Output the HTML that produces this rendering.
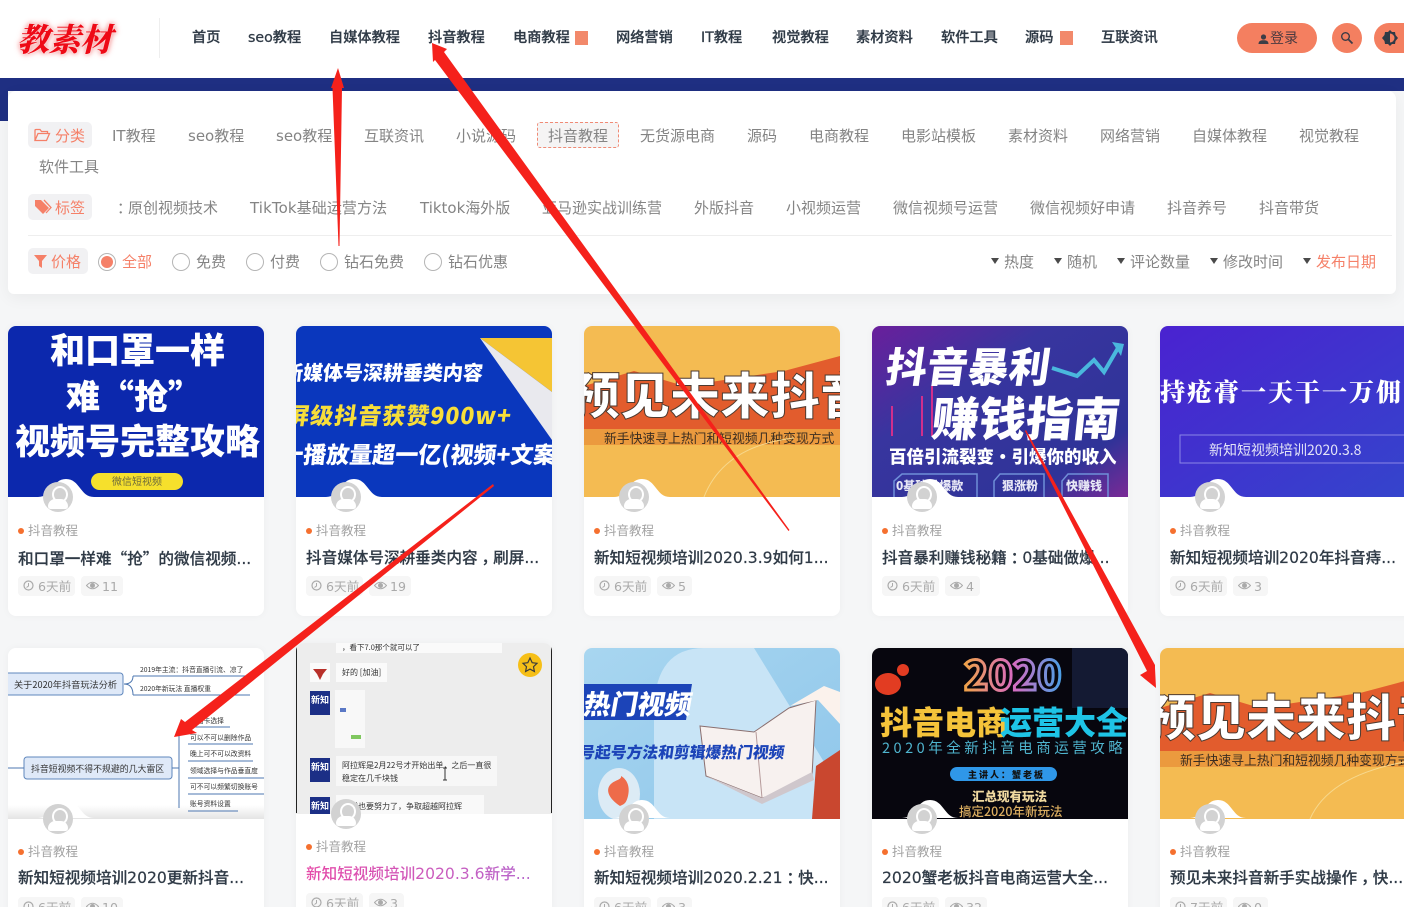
<!DOCTYPE html>
<html lang="zh-CN"><head><meta charset="utf-8"><title>抖音教程</title>
<style>
*{box-sizing:border-box}
html,body{margin:0;padding:0;width:1404px;height:907px;overflow:hidden;background:#f5f6f7}
body{position:relative;font-family:"DejaVu Sans","Noto Sans CJK SC",sans-serif;font-size:14px;color:#777}
.t{position:absolute;white-space:nowrap;line-height:20px;height:20px}
.nav{top:28px;font-size:14.2px;color:#2f3a46;font-weight:500;-webkit-text-stroke:.25px #2f3a46}
.f{font-size:15px;color:#848484}
.chip{position:absolute;background:#f1f1f3;border-radius:5px;height:26px;color:#f58068;font-size:15px;line-height:28px;white-space:nowrap}
.radio{position:absolute;top:253px;width:18px;height:18px;border:1px solid #b5b5b5;border-radius:50%;background:#fff}
.sq{position:absolute;top:31px;width:13px;height:14px;background:#f2896b}
.car{position:absolute;top:258px;width:0;height:0;border-left:4.500px solid transparent;border-right:4.500px solid transparent;border-top:6px solid #4a4a4a}
.card{position:absolute;width:256px;background:#fff;border-radius:8px;box-shadow:0 0 8px rgba(0,0,0,.04);overflow:hidden}
.card svg.th{position:absolute;left:0;display:block}
.notch{position:absolute;left:8px;width:100px;height:18px}
.av{position:absolute;left:35px;width:30px;height:30px;border-radius:50%;background:#d2d2d2;overflow:hidden}
.av:before{content:"";position:absolute;left:9px;top:4px;width:12px;height:13px;border-radius:50%;border:2px solid #fff;background:#d2d2d2}
.av:after{content:"";position:absolute;left:5px;top:17px;width:20px;height:10px;border-radius:8px 8px 3px 3px;background:#fff}
.dot{position:absolute;left:10px;width:6px;height:6px;border-radius:50%;background:#f5702f}
.cat{position:absolute;left:20px;font-size:12.500px;color:#a2a2a2;line-height:18px;white-space:nowrap}
.ti{position:absolute;left:10px;width:245px;font-size:15.600px;color:#2f3a46;line-height:22px;white-space:nowrap;font-weight:500;-webkit-text-stroke:.2px #2f3a46}
.p{display:inline-block;transform:translateX(4px)}
.q{font-family:"Noto Sans CJK SC",sans-serif}
.m{position:absolute;height:20px;background:#f6f6f6;border-radius:4px;font-size:12.600px;color:#aaa;line-height:21px;white-space:nowrap;padding-left:20px}
.m.e{padding-left:21px}
.m svg{position:absolute;left:5px;top:4px}
</style></head><body>

<!-- header -->
<div style="position:absolute;left:0;top:0;width:1404px;height:78px;background:#fff"></div>
<div style="position:absolute;left:0;top:78px;width:1404px;height:13px;background:#1f2f82"></div>
<div style="position:absolute;left:0;top:91px;width:8px;height:30px;background:#1f2f82"></div>

<div class="t" style="left:17px;top:17px;height:42px;line-height:42px;font-family:'Noto Serif CJK SC',serif;font-weight:900;font-size:32px;font-style:italic;letter-spacing:-.5px;color:#ee0a16;text-shadow:0 0 2px #fff,0 0 4px #f48f8f,0 0 7px #f48f8f">教素材</div>
<div style="position:absolute;left:159px;top:18px;width:1px;height:40px;background:#eee"></div>

<div class="t nav" style="left:192px">首页</div>
<div class="t nav" style="left:248px">seo教程</div>
<div class="t nav" style="left:329px">自媒体教程</div>
<div class="t nav" style="left:428px">抖音教程</div>
<div class="t nav" style="left:513px">电商教程</div><div class="sq" style="left:575px"></div>
<div class="t nav" style="left:616px">网络营销</div>
<div class="t nav" style="left:701px">IT教程</div>
<div class="t nav" style="left:772px">视觉教程</div>
<div class="t nav" style="left:856px">素材资料</div>
<div class="t nav" style="left:941px">软件工具</div>
<div class="t nav" style="left:1025px">源码</div><div class="sq" style="left:1060px"></div>
<div class="t nav" style="left:1101px">互联资讯</div>

<div style="position:absolute;left:1237px;top:23px;width:80px;height:30px;border-radius:15px;background:#f47f60"></div>
<svg style="position:absolute;left:1258px;top:34px" width="11" height="11" viewBox="0 0 11 11"><circle cx="5.500" cy="3" r="2.600" fill="#3d3d46"/><path d="M.5 10c0-3 2-3.800 5-3.800s5 .8 5 3.800z" fill="#3d3d46"/></svg>
<div class="t" style="left:1270px;top:29px;font-size:14px;color:#4a3a40">登录</div>
<div style="position:absolute;left:1332px;top:23px;width:30px;height:30px;border-radius:50%;background:#f47f60"></div>
<svg style="position:absolute;left:1340px;top:31px" width="14" height="14" viewBox="0 0 14 14"><circle cx="5.500" cy="5.500" r="3.800" fill="none" stroke="#3b3b46" stroke-width="1.400"/><path d="M8.500 8.500L12.500 12.500" stroke="#3b3b46" stroke-width="1.800"/></svg>
<div style="position:absolute;left:1374px;top:23px;width:30px;height:30px;border-radius:50% 0 0 50%;background:#f47f60"></div>
<svg style="position:absolute;left:1382px;top:30px" width="16" height="16" viewBox="0 0 16 16"><path d="M8 0L10 2 13 2 13.500 5 16 8 13.500 11 13 14 10 14 8 16 6 14 3 14 2.500 11 0 8 2.500 5 3 2 6 2Z" fill="#2f3a46"/><path d="M8 3.500a4.500 4.500 0 0 1 0 9z" fill="#f47f60"/></svg>

<!-- filter panel -->
<div style="position:absolute;left:8px;top:91px;width:1388px;height:203px;background:#fff;border-radius:8px 8px 6px 6px;box-shadow:0 4px 16px rgba(0,0,0,.05)"></div>

<div class="chip" style="left:28px;top:122px;width:64px;padding-left:27px">分类</div>
<svg style="position:absolute;left:34px;top:128px" width="17" height="14" viewBox="0 0 17 14"><path d="M1 12.500V2.500Q1 1.500 2 1.500H6L7.500 3.500H13.500V5.500M1 12.500H12.500L15.500 5.500H4L1 12.500Z" fill="none" stroke="#f58068" stroke-width="1.300"/></svg>
<div class="t f" style="left:112px;top:126px">IT教程</div>
<div class="t f" style="left:188px;top:126px">seo教程</div>
<div class="t f" style="left:276px;top:126px">seo教程</div>
<div class="t f" style="left:364px;top:126px">互联资讯</div>
<div class="t f" style="left:456px;top:126px">小说源码</div>
<div style="position:absolute;left:537px;top:122px;width:82px;height:26px;border:1px dashed #f08a75;border-radius:3px;background:#f5f4f4"></div>
<div class="t f" style="left:548px;top:126px">抖音教程</div>
<div class="t f" style="left:640px;top:126px">无货源电商</div>
<div class="t f" style="left:747px;top:126px">源码</div>
<div class="t f" style="left:809px;top:126px">电商教程</div>
<div class="t f" style="left:901px;top:126px">电影站模板</div>
<div class="t f" style="left:1008px;top:126px">素材资料</div>
<div class="t f" style="left:1100px;top:126px">网络营销</div>
<div class="t f" style="left:1192px;top:126px">自媒体教程</div>
<div class="t f" style="left:1299px;top:126px">视觉教程</div>
<div class="t f" style="left:39px;top:157px">软件工具</div>

<div class="chip" style="left:28px;top:194px;width:64px;padding-left:27px">标签</div>
<svg style="position:absolute;left:34px;top:199px" width="18" height="16" viewBox="0 0 18 16"><path d="M1 1H7L15 9 9 15 1 7Z" fill="#f58068"/><path d="M10 1L17 8.500 12 14" fill="none" stroke="#f58068" stroke-width="1.300"/></svg>
<div class="t f" style="left:113px;top:198px"><span class="p">：</span>原创视频技术</div>
<div class="t f" style="left:250px;top:198px;letter-spacing:.1px">TikTok基础运营方法</div>
<div class="t f" style="left:420px;top:198px">Tiktok海外版</div>
<div class="t f" style="left:542px;top:198px">亚马逊实战训练营</div>
<div class="t f" style="left:694px;top:198px">外版抖音</div>
<div class="t f" style="left:786px;top:198px">小视频运营</div>
<div class="t f" style="left:893px;top:198px">微信视频号运营</div>
<div class="t f" style="left:1030px;top:198px">微信视频好申请</div>
<div class="t f" style="left:1167px;top:198px">抖音养号</div>
<div class="t f" style="left:1259px;top:198px">抖音带货</div>

<div style="position:absolute;left:28px;top:235px;width:1364px;height:1px;background:#eee"></div>

<div class="chip" style="left:28px;top:248px;width:60px;padding-left:23px">价格</div>
<svg style="position:absolute;left:34px;top:255px" width="13" height="13" viewBox="0 0 13 13"><path d="M0 0H13L8 6V13L5 11V6Z" fill="#f58068"/></svg>
<div class="radio" style="left:98px"></div><div style="position:absolute;left:102px;top:257px;width:10px;height:10px;border-radius:50%;background:#f58068;box-shadow:0 0 0 1px #f58068"></div>
<div class="t f" style="left:122px;top:252px;color:#f58068">全部</div>
<div class="radio" style="left:172px"></div><div class="t f" style="left:196px;top:252px">免费</div>
<div class="radio" style="left:246px"></div><div class="t f" style="left:270px;top:252px">付费</div>
<div class="radio" style="left:320px"></div><div class="t f" style="left:344px;top:252px">钻石免费</div>
<div class="radio" style="left:424px"></div><div class="t f" style="left:448px;top:252px">钻石优惠</div>

<div class="car" style="left:991px"></div><div class="t f" style="left:1004px;top:252px">热度</div>
<div class="car" style="left:1054px"></div><div class="t f" style="left:1067px;top:252px">随机</div>
<div class="car" style="left:1117px"></div><div class="t f" style="left:1130px;top:252px">评论数量</div>
<div class="car" style="left:1210px"></div><div class="t f" style="left:1223px;top:252px">修改时间</div>
<div class="car" style="left:1303px"></div><div class="t f" style="left:1316px;top:252px;color:#f58068">发布日期</div>

<!-- ROW 1 -->
<div class="card" style="left:8px;top:326px;height:290px">
<svg class="th" style="top:0" width="256" height="171" viewBox="0 0 256 171" font-family="'Noto Sans CJK SC',sans-serif" font-weight="900"><rect width="256" height="171" fill="#0c28ad"/>
<text x="42" y="37" font-size="35" fill="#fff">和口罩一样</text><text x="58" y="83" font-size="34" fill="#fff">难“抢”</text><text x="7" y="128" font-size="35" fill="#fff">视频号完整攻略</text>
<rect x="83" y="147" width="92" height="17" rx="8.500" fill="#f6e02c"/><text x="104" y="159" font-size="10" font-weight="400" fill="#6d6a3a">微信短视频</text></svg>
<svg class="notch" style="top:153px" viewBox="0 0 100 18"><path d="M22 18C36 18 36 0 50 0S64 18 78 18Z" fill="#fff"/></svg>
<div class="av" style="top:156px"></div><div class="dot" style="top:202px"></div><div class="cat" style="top:196px">抖音教程</div>
<div class="ti" style="top:221px">和口罩一样难<span class="q">“</span>抢<span class="q">”</span>的微信视频...</div>
<div class="m" style="left:10px;top:250px;width:57px"><svg width="11" height="11" viewBox="0 0 11 11"><circle cx="5.500" cy="5.500" r="4.500" fill="none" stroke="#aaa" stroke-width="1.200"/><path d="M5.500 3V6L3.500 7.500" fill="none" stroke="#aaa"/></svg>6天前</div>
<div class="m e" style="left:73px;top:250px;width:42px"><svg width="13" height="11" viewBox="0 0 13 11"><path d="M.5 5.500Q6.500-1 12.500 5.500 6.500 12 .5 5.500Z" fill="none" stroke="#aaa"/><circle cx="6.500" cy="5.500" r="2.500" fill="#aaa"/></svg>11</div>
</div>

<div class="card" style="left:296px;top:326px;height:290px">
<svg class="th" style="top:0" width="256" height="171" viewBox="0 0 256 171" font-family="'Noto Sans CJK SC',sans-serif" font-weight="900"><rect width="256" height="171" fill="#0a37bd"/>
<text x="-14" y="54" font-size="20" fill="#fff" transform="skewX(-6) translate(6 0)">新媒体号深耕垂类内容</text>
<text x="-11" y="98" font-size="23" letter-spacing="1" fill="#f7de3a" transform="skewX(-8) translate(14 0)">屏级抖音获赞900w+</text>
<text x="-16" y="137" font-size="23" fill="#fff" transform="skewX(-6) translate(14 0)">十播放量超一亿(视频+文案</text>
<path d="M184 12H256V66Z" fill="#f5c534"/><path d="M184 12L256 66V114Z" fill="#e9e9ee"/></svg>
<svg class="notch" style="top:153px" viewBox="0 0 100 18"><path d="M22 18C36 18 36 0 50 0S64 18 78 18Z" fill="#fff"/></svg>
<div class="av" style="top:156px"></div><div class="dot" style="top:202px"></div><div class="cat" style="top:196px">抖音教程</div>
<div class="ti" style="top:221px">抖音媒体号深耕垂类内容<span class="p">，</span>刷屏...</div>
<div class="m" style="left:10px;top:250px;width:57px"><svg width="11" height="11" viewBox="0 0 11 11"><circle cx="5.500" cy="5.500" r="4.500" fill="none" stroke="#aaa" stroke-width="1.200"/><path d="M5.500 3V6L3.500 7.500" fill="none" stroke="#aaa"/></svg>6天前</div>
<div class="m e" style="left:73px;top:250px;width:42px"><svg width="13" height="11" viewBox="0 0 13 11"><path d="M.5 5.500Q6.500-1 12.500 5.500 6.500 12 .5 5.500Z" fill="none" stroke="#aaa"/><circle cx="6.500" cy="5.500" r="2.500" fill="#aaa"/></svg>19</div>
</div>

<div class="card" style="left:584px;top:326px;height:290px">
<svg class="th" style="top:0" width="256" height="171" viewBox="0 0 256 171" font-family="'Noto Sans CJK SC',sans-serif" font-weight="900"><rect width="256" height="171" fill="#f4bb52"/>
<path d="M0 60L50 45 100 60 200 45 256 30V118H0Z" fill="#e25c2d"/><rect y="103" width="256" height="16" fill="#eb9a3e"/>
<text x="-14" y="88" font-size="50" fill="#fff" stroke="#4d3a30" stroke-width="1">预见未来抖音</text>
<text x="20" y="117" font-size="12.800" font-weight="400" fill="#3b2d20">新手快速寻上热门和短视频几种变现方式</text>
<path d="M120 171Q140 120 210 112" fill="none" stroke="#f7d88d"/></svg>
<svg class="notch" style="top:153px" viewBox="0 0 100 18"><path d="M22 18C36 18 36 0 50 0S64 18 78 18Z" fill="#fff"/></svg>
<div class="av" style="top:156px"></div><div class="dot" style="top:202px"></div><div class="cat" style="top:196px">抖音教程</div>
<div class="ti" style="top:221px">新知短视频培训2020.3.9如何1...</div>
<div class="m" style="left:10px;top:250px;width:57px"><svg width="11" height="11" viewBox="0 0 11 11"><circle cx="5.500" cy="5.500" r="4.500" fill="none" stroke="#aaa" stroke-width="1.200"/><path d="M5.500 3V6L3.500 7.500" fill="none" stroke="#aaa"/></svg>6天前</div>
<div class="m e" style="left:73px;top:250px;width:35px"><svg width="13" height="11" viewBox="0 0 13 11"><path d="M.5 5.500Q6.500-1 12.500 5.500 6.500 12 .5 5.500Z" fill="none" stroke="#aaa"/><circle cx="6.500" cy="5.500" r="2.500" fill="#aaa"/></svg>5</div>
</div>

<div class="card" style="left:872px;top:326px;height:290px">
<svg class="th" style="top:0" width="256" height="171" viewBox="0 0 256 171" font-family="'Noto Sans CJK SC',sans-serif" font-weight="900"><defs><linearGradient id="g4" x1="0" y1="0" x2="1" y2="1"><stop offset="0" stop-color="#6a1f9c"/><stop offset=".35" stop-color="#38359f"/><stop offset=".8" stop-color="#2f3398"/><stop offset="1" stop-color="#7a2a96"/></linearGradient></defs><rect width="256" height="171" fill="url(#g4)"/>
<path d="M180 42L205 50 222 34 232 46 246 22" fill="none" stroke="#4ab7dd" stroke-width="4"/><path d="M240 16L252 18 249 30Z" fill="#4ab7dd"/>
<path d="M20 110V80M50 110V70M60 110V60" stroke="#d02f8c" stroke-width="2"/>
<text x="10" y="56" font-size="41" fill="#fff" transform="skewX(-8) translate(10 0)">抖音暴利</text>
<text x="56" y="110" font-size="47" fill="#fff" transform="skewX(-6) translate(14 0)">赚钱指南</text>
<text x="17" y="137" font-size="17.500" fill="#fff">百倍引流裂变·引爆你的收入</text>
<g fill="none" stroke="#6f8fd8" stroke-width="1.500"><path d="M22 171V155L30 148H105V171"/><path d="M122 171V155L128 148H172V171"/><path d="M190 171V155L196 148H236V171"/></g>
<text x="24" y="164" font-size="12" fill="#e6e6f5">0基础做爆款</text><text x="130" y="164" font-size="12" fill="#e6e6f5">狠涨粉</text><text x="194" y="164" font-size="12" fill="#e6e6f5">快赚钱</text></svg>
<svg class="notch" style="top:153px" viewBox="0 0 100 18"><path d="M22 18C36 18 36 0 50 0S64 18 78 18Z" fill="#fff"/></svg>
<div class="av" style="top:156px"></div><div class="dot" style="top:202px"></div><div class="cat" style="top:196px">抖音教程</div>
<div class="ti" style="top:221px">抖音暴利赚钱秘籍<span class="p">：</span>0基础做爆...</div>
<div class="m" style="left:10px;top:250px;width:57px"><svg width="11" height="11" viewBox="0 0 11 11"><circle cx="5.500" cy="5.500" r="4.500" fill="none" stroke="#aaa" stroke-width="1.200"/><path d="M5.500 3V6L3.500 7.500" fill="none" stroke="#aaa"/></svg>6天前</div>
<div class="m e" style="left:73px;top:250px;width:35px"><svg width="13" height="11" viewBox="0 0 13 11"><path d="M.5 5.500Q6.500-1 12.500 5.500 6.500 12 .5 5.500Z" fill="none" stroke="#aaa"/><circle cx="6.500" cy="5.500" r="2.500" fill="#aaa"/></svg>4</div>
</div>

<div class="card" style="left:1160px;top:326px;height:290px">
<svg class="th" style="top:0" width="256" height="171" viewBox="0 0 256 171" font-family="'Noto Serif CJK SC',serif" font-weight="900"><defs><linearGradient id="g5" x1="0" y1="0" x2="1" y2="1"><stop offset="0" stop-color="#4a22d0"/><stop offset="1" stop-color="#3445cc"/></linearGradient></defs><rect width="256" height="171" fill="url(#g5)"/>
<text x="0" y="75" font-size="25" letter-spacing="2" fill="#fff">持疮膏一天干一万佣</text>
<rect x="20" y="109" width="250" height="28" fill="none" stroke="#8b86e6"/>
<text x="49" y="129" font-size="14" font-weight="400" font-family="'Noto Sans CJK SC',sans-serif" fill="#e4e4f7">新知短视频培训2020.3.8</text></svg>
<svg class="notch" style="top:153px" viewBox="0 0 100 18"><path d="M22 18C36 18 36 0 50 0S64 18 78 18Z" fill="#fff"/></svg>
<div class="av" style="top:156px"></div><div class="dot" style="top:202px"></div><div class="cat" style="top:196px">抖音教程</div>
<div class="ti" style="top:221px">新知短视频培训2020年抖音痔...</div>
<div class="m" style="left:10px;top:250px;width:57px"><svg width="11" height="11" viewBox="0 0 11 11"><circle cx="5.500" cy="5.500" r="4.500" fill="none" stroke="#aaa" stroke-width="1.200"/><path d="M5.500 3V6L3.500 7.500" fill="none" stroke="#aaa"/></svg>6天前</div>
<div class="m e" style="left:73px;top:250px;width:35px"><svg width="13" height="11" viewBox="0 0 13 11"><path d="M.5 5.500Q6.500-1 12.500 5.500 6.500 12 .5 5.500Z" fill="none" stroke="#aaa"/><circle cx="6.500" cy="5.500" r="2.500" fill="#aaa"/></svg>3</div>
</div>

<!-- ROW 2 -->
<div class="card" style="left:8px;top:648px;height:290px">
<svg class="th" style="top:0" width="256" height="171" viewBox="0 0 256 171" font-family="'Noto Sans CJK SC',sans-serif"><defs><linearGradient id="g6" x1="0" y1="0" x2="0" y2="1"><stop offset=".92" stop-color="#fff"/><stop offset="1" stop-color="#e4e4e4"/></linearGradient></defs><rect width="256" height="171" fill="url(#g6)"/>
<rect x="-3" y="25" width="118" height="22" rx="3" fill="#dfe9f8" stroke="#5f87bd"/><text x="6" y="40" font-size="9.200" fill="#333">关于2020年抖音玩法分析</text>
<text x="132" y="24" font-size="6.800" fill="#333">2019年主流：抖音直播引流、凉了</text><path d="M125 28H245M125 47H242" stroke="#4d77b0"/><text x="132" y="43" font-size="6.800" fill="#333">2020年新玩法 直播权重</text>
<path d="M116 36Q125 36 125 28M116 36Q125 36 125 47" fill="none" stroke="#4d77b0"/>
<rect x="16" y="109" width="148" height="22" rx="3" fill="#dfe9f8" stroke="#5f87bd"/><text x="23" y="124" font-size="8.900" fill="#333">抖音短视频不得不规避的几大雷区</text>
<path d="M-5 120H16M164 120H171M171 80V160" stroke="#4d77b0" fill="none"/>
<g font-size="6.800" fill="#333"><text x="182" y="75">封面卡选择</text><text x="182" y="92">可以不可以删除作品</text><text x="182" y="108">晚上可不可以改资料</text><text x="182" y="125">领域选择与作品垂直度</text><text x="182" y="141">可不可以频繁切换账号</text><text x="182" y="158">账号资料设置</text></g>
<path d="M180 79H222M180 96H245M180 113H245M180 130H256M180 146H256M180 163H230" stroke="#4d77b0"/></svg>
<svg class="notch" style="top:152px" viewBox="0 0 100 18"><path d="M22 18C36 18 36 0 50 0S64 18 78 18Z" fill="#fff"/></svg>
<div class="av" style="top:156px"></div><div class="dot" style="top:201px"></div><div class="cat" style="top:195px">抖音教程</div>
<div class="ti" style="top:219px">新知短视频培训2020更新抖音...</div>
<div class="m" style="left:10px;top:249px;width:57px"><svg width="11" height="11" viewBox="0 0 11 11"><circle cx="5.500" cy="5.500" r="4.500" fill="none" stroke="#aaa" stroke-width="1.200"/><path d="M5.500 3V6L3.500 7.500" fill="none" stroke="#aaa"/></svg>6天前</div>
<div class="m e" style="left:73px;top:249px;width:42px"><svg width="13" height="11" viewBox="0 0 13 11"><path d="M.5 5.500Q6.500-1 12.500 5.500 6.500 12 .5 5.500Z" fill="none" stroke="#aaa"/><circle cx="6.500" cy="5.500" r="2.500" fill="#aaa"/></svg>10</div>
</div>

<div class="card" style="left:296px;top:643px;height:295px">
<svg class="th" style="top:0" width="256" height="171" viewBox="0 0 256 171" font-family="'Noto Sans CJK SC',sans-serif"><rect width="256" height="171" fill="#ededed"/><path d="M0.500 0V170M255.500 0V170" stroke="#222"/>
<rect x="40" y="0" width="166" height="10" fill="#fafafa"/><text x="46" y="7" font-size="7.500" fill="#333">，看下7.0那个就可以了</text>
<rect x="14" y="20" width="20" height="19" fill="#fafafa"/><path d="M17 26H31L27 31 24 37 21 31Z" fill="#b8302a"/>
<rect x="40" y="20" width="51" height="19" fill="#fafafa"/><text x="46" y="32" font-size="8" fill="#333">好的 [加油]</text>
<rect x="14" y="48" width="20" height="24" fill="#1c2f86"/><text x="15" y="60" font-size="9" font-weight="700" fill="#fff">新知</text>
<rect x="39" y="47" width="30" height="58" fill="#f8f8f8"/><rect x="44" y="65" width="6" height="4" fill="#5a78c5"/><rect x="55" y="92" width="10" height="4" fill="#7fc75f"/>
<rect x="14" y="115" width="20" height="24" fill="#1c2f86"/><text x="15" y="127" font-size="9" font-weight="700" fill="#fff">新知</text>
<rect x="40" y="113" width="161" height="30" fill="#f7f7f7"/><text x="46" y="125" font-size="8" fill="#333">阿拉辉是2月22号才开始出单，之后一直很</text><text x="46" y="138" font-size="8" fill="#333">稳定在几千块钱</text>
<path d="M149 125V137M147 125H151M147 137H151" stroke="#333"/>
<rect x="14" y="154" width="20" height="17" fill="#1c2f86"/><text x="15" y="166" font-size="9" font-weight="700" fill="#fff">新知</text>
<rect x="40" y="152" width="148" height="19" fill="#f9f9f9"/><text x="46" y="166" font-size="8" fill="#333">新学也要努力了，争取超越阿拉辉</text>
<circle cx="234" cy="22" r="12" fill="#f6bf17"/><path d="M234 15L236.200 19.700 241 20.300 237.500 23.700 238.400 28.500 234 26.100 229.600 28.500 230.500 23.700 227 20.300 231.800 19.700Z" fill="none" stroke="#3c3c3c" stroke-width="1.200"/></svg>
<div class="av" style="top:156px"></div><div class="dot" style="top:201px"></div><div class="cat" style="top:195px">抖音教程</div>
<div class="ti" style="top:220px;background:linear-gradient(90deg,#e64aa8,#b36ad0);-webkit-background-clip:text;background-clip:text;color:transparent;-webkit-text-stroke:0">新知短视频培训2020.3.6新学...</div>
<div class="m" style="left:10px;top:250px;width:57px"><svg width="11" height="11" viewBox="0 0 11 11"><circle cx="5.500" cy="5.500" r="4.500" fill="none" stroke="#aaa" stroke-width="1.200"/><path d="M5.500 3V6L3.500 7.500" fill="none" stroke="#aaa"/></svg>6天前</div>
<div class="m e" style="left:73px;top:250px;width:35px"><svg width="13" height="11" viewBox="0 0 13 11"><path d="M.5 5.500Q6.500-1 12.500 5.500 6.500 12 .5 5.500Z" fill="none" stroke="#aaa"/><circle cx="6.500" cy="5.500" r="2.500" fill="#aaa"/></svg>3</div>
</div>

<div class="card" style="left:584px;top:648px;height:290px">
<svg class="th" style="top:0" width="256" height="171" viewBox="0 0 256 171" font-family="'Noto Sans CJK SC',sans-serif" font-weight="900"><defs><linearGradient id="g8" x1="0" y1="0" x2="1" y2="1"><stop offset="0" stop-color="#a8d6f0"/><stop offset="1" stop-color="#8fc6ea"/></linearGradient></defs><rect width="256" height="171" fill="url(#g8)"/>
<path d="M70 171V60Q72 0 120 0H170L256 140V171Z" fill="#c8e4f6"/>
<path d="M116 78L170 84 205 60 232 52 228 128 192 146 178 150 122 128Z" fill="#f7f1ef" stroke="#8a6f6f"/><path d="M172 84L178 150" stroke="#b59a9a"/><path d="M122 128L178 156 230 132 228 124 178 150Z" fill="#cfc7cc"/>
<path d="M206 58L240 38 256 44V76L234 52Z" fill="#fbf2ec"/><path d="M232 118L256 102V171H228Z" fill="#c9472f"/>
<path d="M0 36H108L102 72H0Z" fill="#1c44b8"/><text x="-2" y="66" font-size="27" fill="#fff" transform="skewX(-10) translate(12 0)">热门视频</text>
<text x="-4" y="110" font-size="15.800" fill="#1c44b8" transform="skewX(-8) translate(14 0)">号起号方法和剪辑爆热门视频</text>
<ellipse cx="35" cy="146" rx="21" ry="26" fill="#dcebf5"/><path d="M36 158C24 150 22 142 26 137S38 132 37 128C44 132 46 140 44 148S40 156 36 158Z" fill="#ee6b4a"/></svg>
<svg class="notch" style="top:152px" viewBox="0 0 100 18"><path d="M22 18C36 18 36 0 50 0S64 18 78 18Z" fill="#fff"/></svg>
<div class="av" style="top:156px"></div><div class="dot" style="top:201px"></div><div class="cat" style="top:195px">抖音教程</div>
<div class="ti" style="top:219px">新知短视频培训2020.2.21<span class="p">：</span>快...</div>
<div class="m" style="left:10px;top:249px;width:57px"><svg width="11" height="11" viewBox="0 0 11 11"><circle cx="5.500" cy="5.500" r="4.500" fill="none" stroke="#aaa" stroke-width="1.200"/><path d="M5.500 3V6L3.500 7.500" fill="none" stroke="#aaa"/></svg>6天前</div>
<div class="m e" style="left:73px;top:249px;width:35px"><svg width="13" height="11" viewBox="0 0 13 11"><path d="M.5 5.500Q6.500-1 12.500 5.500 6.500 12 .5 5.500Z" fill="none" stroke="#aaa"/><circle cx="6.500" cy="5.500" r="2.500" fill="#aaa"/></svg>3</div>
</div>

<div class="card" style="left:872px;top:648px;height:290px">
<svg class="th" style="top:0" width="256" height="171" viewBox="0 0 256 171" font-family="'Noto Sans CJK SC',sans-serif" font-weight="900"><defs><linearGradient id="g9" x1="0" y1="0" x2="1" y2="0"><stop offset="0" stop-color="#f0a347"/><stop offset=".5" stop-color="#d86bc0"/><stop offset="1" stop-color="#4a9fe6"/></linearGradient></defs><rect width="256" height="171" fill="#07060e"/>
<path d="M200 0H256V60H200Z" fill="#141a33"/><ellipse cx="16" cy="36" rx="13" ry="11" fill="#e23c22"/><circle cx="31" cy="22" r="6" fill="#e23c22"/>
<text x="92" y="42" font-size="40" fill="none" stroke="url(#g9)" stroke-width="3">2020</text>
<text x="8" y="86" font-size="32" fill="#f5c33a">抖音电商</text><text x="128" y="86" font-size="32" fill="#1ec4e6">运营大全</text>
<text x="10" y="105" font-size="14.500" font-weight="400" letter-spacing="3.500" fill="#4fb4ce">2020年全新抖音电商运营攻略</text>
<rect x="78" y="119" width="107" height="14" rx="7" fill="#2f97e8"/><text x="96" y="130" font-size="9" fill="#111" letter-spacing="2">主讲人：蟹老板</text>
<text x="100" y="153" font-size="12.500" fill="#f0d9a0">汇总现有玩法</text><text x="87" y="168" font-size="12.500" font-weight="500" fill="#dcae60">搞定2020年新玩法</text></svg>
<svg class="notch" style="top:152px" viewBox="0 0 100 18"><path d="M22 18C36 18 36 0 50 0S64 18 78 18Z" fill="#fff"/></svg>
<div class="av" style="top:156px"></div><div class="dot" style="top:201px"></div><div class="cat" style="top:195px">抖音教程</div>
<div class="ti" style="top:219px">2020蟹老板抖音电商运营大全...</div>
<div class="m" style="left:10px;top:249px;width:57px"><svg width="11" height="11" viewBox="0 0 11 11"><circle cx="5.500" cy="5.500" r="4.500" fill="none" stroke="#aaa" stroke-width="1.200"/><path d="M5.500 3V6L3.500 7.500" fill="none" stroke="#aaa"/></svg>6天前</div>
<div class="m e" style="left:73px;top:249px;width:42px"><svg width="13" height="11" viewBox="0 0 13 11"><path d="M.5 5.500Q6.500-1 12.500 5.500 6.500 12 .5 5.500Z" fill="none" stroke="#aaa"/><circle cx="6.500" cy="5.500" r="2.500" fill="#aaa"/></svg>32</div>
</div>

<div class="card" style="left:1160px;top:648px;height:290px">
<svg class="th" style="top:0" width="256" height="171" viewBox="0 0 256 171" font-family="'Noto Sans CJK SC',sans-serif" font-weight="900"><rect width="256" height="171" fill="#f4bb52"/>
<path d="M0 60L50 45 100 60 200 45 256 30V118H0Z" fill="#e25c2d"/><rect y="103" width="256" height="16" fill="#eb9a3e"/>
<text x="-14" y="88" font-size="50" fill="#fff" stroke="#4d3a30" stroke-width="1">预见未来抖音</text>
<text x="20" y="117" font-size="12.800" font-weight="400" fill="#3b2d20">新手快速寻上热门和短视频几种变现方式</text>
<path d="M150 171Q170 125 256 112" fill="none" stroke="#f7d88d"/></svg>
<svg class="notch" style="top:152px" viewBox="0 0 100 18"><path d="M22 18C36 18 36 0 50 0S64 18 78 18Z" fill="#fff"/></svg>
<div class="av" style="top:156px"></div><div class="dot" style="top:201px"></div><div class="cat" style="top:195px">抖音教程</div>
<div class="ti" style="top:219px">预见未来抖音新手实战操作<span class="p">，</span>快...</div>
<div class="m" style="left:10px;top:249px;width:57px"><svg width="11" height="11" viewBox="0 0 11 11"><circle cx="5.500" cy="5.500" r="4.500" fill="none" stroke="#aaa" stroke-width="1.200"/><path d="M5.500 3V6L3.500 7.500" fill="none" stroke="#aaa"/></svg>7天前</div>
<div class="m e" style="left:73px;top:249px;width:35px"><svg width="13" height="11" viewBox="0 0 13 11"><path d="M.5 5.500Q6.500-1 12.500 5.500 6.500 12 .5 5.500Z" fill="none" stroke="#aaa"/><circle cx="6.500" cy="5.500" r="2.500" fill="#aaa"/></svg>0</div>
</div>

<!-- red annotation arrows -->
<svg style="position:absolute;left:0;top:0;pointer-events:none" width="1404" height="907" viewBox="0 0 1404 907">
<path d="M338 68L344 88 342 88 339.500 246 338.500 246 332.500 88 331 88Z" fill="#f5211b"/>
<path d="M432 43L447 49 444 52 789.500 530 788.500 531 435 60 433 62Z" fill="#f5211b"/>
<path d="M174 737L181 719 185 722 493 484 494 486 192 730 197 733Z" fill="#f5211b"/>
<path d="M1156 688L1140 675 1147 671 1025 431 1026 430 1155 665 1155 668Z" fill="#f5211b"/>
</svg>
</body></html>
